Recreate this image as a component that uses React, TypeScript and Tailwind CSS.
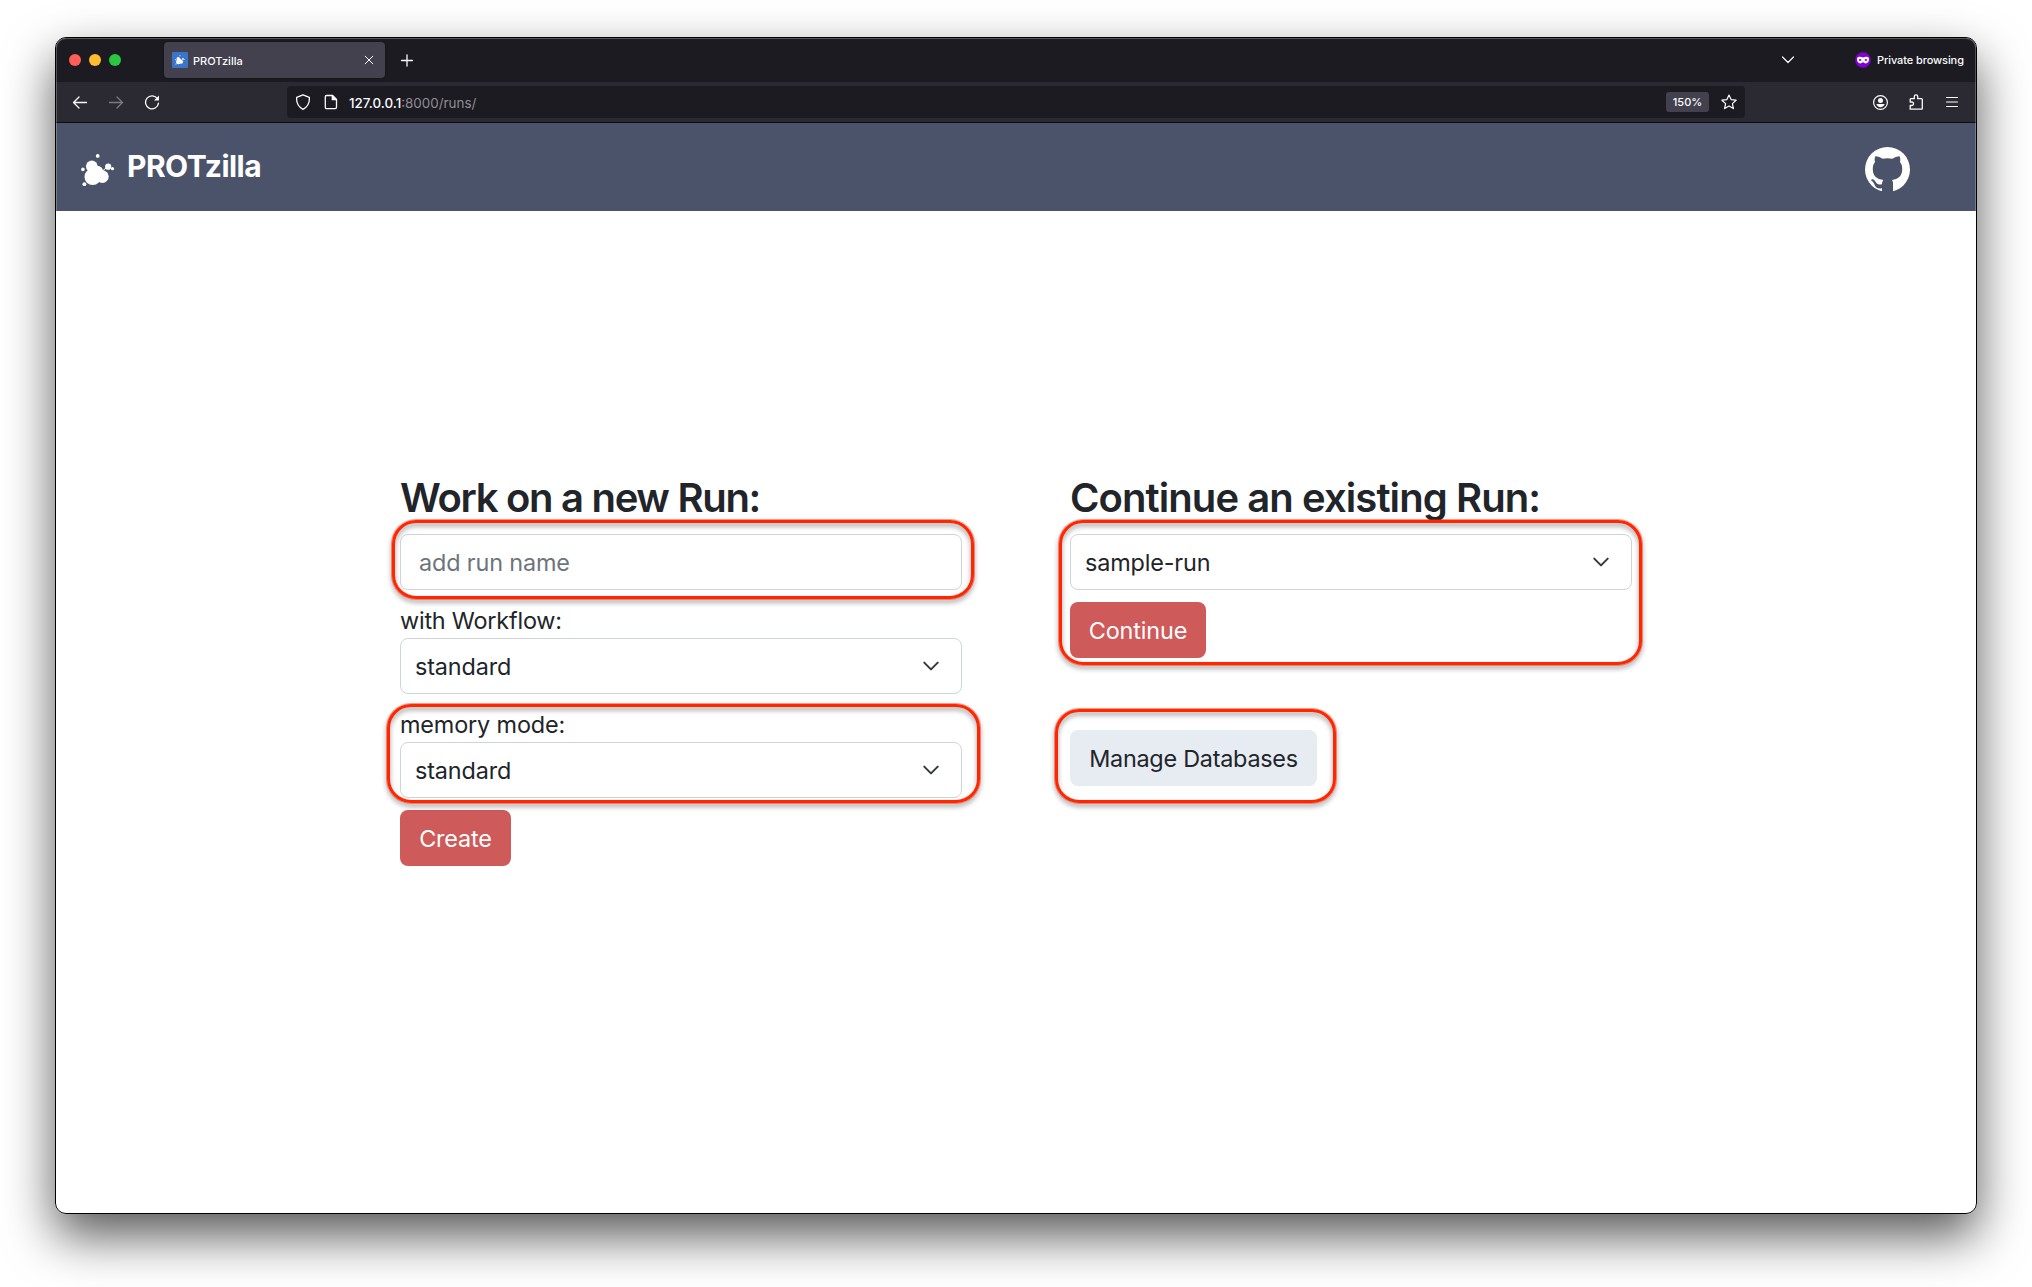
import React from "react";

function Blob({ className }: { className?: string }) {
  return (
    <svg viewBox="0 0 34 33" className={className} fill="currentColor">
      <circle cx="16.700" cy="1.900" r="1.900" />
      <circle cx="1.900" cy="15.400" r="1.800" />
      <circle cx="3.400" cy="30.200" r="1.900" />
      <circle cx="31.500" cy="14.700" r="1.600" />
      <circle cx="27.200" cy="12.700" r="3.100" />
      <circle cx="10.800" cy="12.400" r="5.800" />
      <circle cx="11.700" cy="22.900" r="8.200" />
      <circle cx="16.300" cy="17.500" r="5.800" />
      <circle cx="21.400" cy="22.600" r="6.300" />
      <path d="M21 17.500 25.500 13.500" stroke="currentColor" strokeWidth="1" />
    </svg>
  );
}

function Chevron({ className }: { className?: string }) {
  return (
    <svg viewBox="0 0 16 16" className={className} fill="none" stroke="#343a40" strokeWidth="1.800" strokeLinecap="round" strokeLinejoin="round">
      <path d="m2 5 6 6 6-6" />
    </svg>
  );
}

function Select({ value }: { value: string }) {
  return (
    <div className="flex h-14 w-[562px] items-center justify-between rounded-[8px] border border-[#ced4da] bg-white pl-[14px] pr-[21px] leading-none text-[#212529]">
      <span className="pt-0.5">{value}</span>
      <Chevron className="h-[18px] w-[18px]" />
    </div>
  );
}

function Highlight({ className }: { className: string }) {
  return (
    <div className={`pointer-events-none absolute rounded-[24px] border-3 border-[#ff2600] shadow-[0_0_0_1px_rgba(255,38,0,0.45)] drop-shadow-[0_3px_2.5px_rgba(0,0,0,0.4)] ${className}`} />
  );
}

function TabStrip() {
  return (
    <div className="flex h-11 items-center bg-[#1c1b22] text-[#fbfbfe]">
      <div className="ml-[13px] flex gap-2">
        <i className="h-3 w-3 rounded-full bg-[#ff5f57]" />
        <i className="h-3 w-3 rounded-full bg-[#febc2e]" />
        <i className="h-3 w-3 rounded-full bg-[#28c840]" />
      </div>
      <div className="ml-[43px] flex h-9 w-[221px] items-center rounded-[4px] bg-[#42414d] pl-2 shadow-[0_0_3px_rgba(0,0,0,0.4)]">
        <div className="flex h-4 w-4 items-center justify-center rounded-[1px] bg-[#3a75c9]">
          <Blob className="h-[10px] w-[10px]" />
        </div>
        <span className="ml-[5px] pt-0.5 text-[11px] leading-none font-medium">PROTzilla</span>
        <svg viewBox="0 0 10 10" className="mr-[11px] ml-auto h-[10px] w-[10px]" stroke="currentColor" strokeWidth="1" strokeLinecap="round">
          <path d="m1.200 1.200 7.600 7.600M8.800 1.200 1.200 8.800" />
        </svg>
      </div>
      <svg viewBox="0 0 14 14" className="ml-[15px] h-[14px] w-[14px]" stroke="currentColor" strokeWidth="1.3" strokeLinecap="round">
        <path d="M7 2v11M1.500 7.500h11" />
      </svg>
      <svg viewBox="0 0 14 8" className="ml-auto h-2 w-[14px]" fill="none" stroke="currentColor" strokeWidth="1.2" strokeLinecap="round" strokeLinejoin="round">
        <path d="m1.500 1 5.500 5.500 5.500-5.500" />
      </svg>
      <svg viewBox="0 0 16 16" className="ml-[60px] h-4 w-4">
        <circle cx="8" cy="8" r="7.800" fill="#8000d7" />
        <path fill="#fff" fillRule="evenodd" d="M2 6.200C2.800 4.700 5.600 4.300 8 5.500c2.400-1.200 5.200-.8 6 .7.300 3.300-1.300 5.200-3.300 5.200-1.300 0-1.900-1.200-2.700-1.200s-1.400 1.200-2.700 1.200C3.300 11.400 1.700 9.500 2 6.200zM3.700 8c.7 1.200 2.100 1.200 2.900.1-.8-1.300-2.300-1.300-2.900-.1zm5.700.1c.8 1.100 2.200 1.100 2.900-.1-.6-1.200-2.100-1.200-2.900.1z" />
      </svg>
      <span className="mr-[12px] ml-[6px] w-[87px] pt-px text-[11px] leading-none font-medium tracking-[-0.09px] whitespace-nowrap">Private browsing</span>
    </div>
  );
}

function Toolbar() {
  return (
    <div className="flex h-[41px] items-center border-b border-[#0c0c0d] bg-[#2b2a33] text-[#fbfbfe]">
      <svg viewBox="0 0 16 16" className="ml-4 h-4 w-4" fill="none" stroke="currentColor" strokeWidth="1.3" strokeLinecap="round" strokeLinejoin="round">
        <path d="M14.500 8.500H1.500M7 3 1.500 8.500 7 14" />
      </svg>
      <svg viewBox="0 0 16 16" className="ml-5 h-4 w-4 text-[#7b7a82]" fill="none" stroke="currentColor" strokeWidth="1.3" strokeLinecap="round" strokeLinejoin="round">
        <path d="M1.500 8.500h13M9 3 14.500 8.500 9 14" />
      </svg>
      <svg viewBox="0 0 16 16" className="ml-5 h-4 w-4" fill="none" stroke="currentColor" strokeWidth="1.3" strokeLinecap="round">
        <path d="M13.500 4.800A6.500 6.500 0 1 0 14.500 9.200" />
        <path d="M15 1.500v5H10z" fill="currentColor" stroke="none" />
      </svg>
      <div className="ml-[127px] flex h-8 w-[1458px] items-center rounded-[4px] bg-[#1c1b22]">
        <svg viewBox="0 0 16 16" className="ml-2 h-4 w-4" fill="none" stroke="currentColor" strokeWidth="1.3" strokeLinejoin="round">
          <path d="M8 .8 14.300 3.300c.5 4.700-1.300 9.400-6.300 12C3 12.700 1.200 8 1.700 3.300z" />
        </svg>
        <svg viewBox="0 0 16 16" className="ml-3 h-4 w-4" fill="none" stroke="currentColor" strokeWidth="1.300" strokeLinejoin="round">
          <path d="M3.600 1.500h5.900l4 4v7.800a1.300 1.300 0 0 1-1.300 1.300H3.600a1.300 1.300 0 0 1-1.300-1.300V2.800a1.300 1.300 0 0 1 1.300-1.300z" />
          <path d="M9.300 1.500v4.200h4.200z" fill="currentColor" />
        </svg>
        <div className="ml-[10px] pt-[3px] text-[13.400px] leading-none text-[#8f8e96]">
          <span className="font-medium text-[#fbfbfe]">127.0.0.1</span>:8000/runs/
        </div>
        <span className="mr-3 ml-auto flex h-5 w-[43px] items-center justify-center rounded-[3px] bg-[#42414d] text-[11px] leading-none font-medium">150%</span>
        <svg viewBox="0 0 16 16" className="mr-2 h-4 w-4" fill="none" stroke="currentColor" strokeWidth="1.200" strokeLinejoin="round">
          <path d="m8 1 2.100 4.600 5 .6-3.700 3.400 1 5L8 12.100l-4.400 2.500 1-5L.9 6.200l5-.6z" />
        </svg>
      </div>
      <svg viewBox="0 0 16 16" className="ml-auto h-4 w-4">
        <circle cx="8.500" cy="8.500" r="6.900" fill="none" stroke="currentColor" strokeWidth="1.200" />
        <circle cx="8.500" cy="6.400" r="2.500" fill="currentColor" />
        <path d="M4.400 10h8.200c-.3 2-2.200 3.200-4.100 3.200s-3.800-1.200-4.100-3.200z" fill="currentColor" />
      </svg>
      <svg viewBox="0 0 16 16" className="ml-5 h-4 w-4" fill="none" stroke="currentColor" strokeWidth="1.300" strokeLinejoin="round">
        <path d="M2.200 15.200V11.500h1.600a1.700 1.700 0 0 0 0-3.500H2.200V5.500a.8.800 0 0 1 .8-.8h3.300V2.500a1.700 1.700 0 0 1 3.400 0v2.200h3.800a.8.800 0 0 1 .8.800v8.900a.8.800 0 0 1-.8.800z" />
      </svg>
      <svg viewBox="0 0 16 16" className="mr-4 ml-5 h-4 w-4" stroke="currentColor" strokeWidth="1.200" strokeLinecap="round">
        <path d="M2.500 3.500h11M2.500 8h11M2.500 12.500h11" />
      </svg>
    </div>
  );
}

export default function App() {
  return (
    <div className="h-[1287px] w-[2032px] overflow-hidden bg-white pt-[37px] pl-[55px] font-['Inter',sans-serif]">
      <div className="h-[1177px] w-[1922px] rounded-[11px] shadow-[0_22px_50px_rgba(0,0,0,0.66)]">
        <div className="relative flex h-full flex-col overflow-hidden rounded-[11px] border border-black bg-white">
          <TabStrip />
          <Toolbar />
          <header className="flex h-[88px] shrink-0 items-start bg-[#4b536a] text-white">
            <Blob className="mt-[31px] ml-[25px] h-[33px] w-[34px]" />
            <h1 className="mt-[25px] ml-[12px] text-[30px] leading-[36px] font-bold tracking-[-0.55px]">PROTzilla</h1>
            <svg viewBox="0 0 45 45" className="mt-6 mr-[66px] ml-auto h-[45px] w-[45px]">
              <circle cx="22.500" cy="22.500" r="22.500" fill="#fff" />
              <path
                fill="#4b536a"
                d="M10.300 9.300C13 9.300 15.500 10.500 17.500 11.800C20.800 11 24.200 11 27.500 11.800C29.500 10.500 32 9.300 34.600 9.300C35.500 11.500 35.400 13.500 35 15C37 17.500 37.300 20 37.200 22.500C37.200 29 33 32.200 27 33C28 34.300 28 36 28 37.500V46H17V41.300C10.500 42.500 10.300 38.500 8.600 36C7.800 34.600 6.800 33.800 6 33.200C6.500 31.800 8.700 32 10 34C11.500 36.300 12.500 38.300 17 37.300C17 36 17.300 34 18.300 33C12 32.200 7.800 29 7.800 22.500C7.700 20 8 17.500 10 15C9.500 13 9.500 11 10.300 9.300z"
              />
            </svg>
          </header>
          <main className="flex gap-[108px] pt-[262px] pl-[344px] text-[23.4px] tracking-[-0.14px] text-[#212529]">
            <section className="w-[562px]">
              <h2 className="h-[61px] text-[40px] leading-[50px] font-semibold tracking-[-1.3px] whitespace-nowrap">Work on a new Run:</h2>
              <div className="relative">
                <div className="flex h-14 items-center rounded-[8px] border border-[#ced4da] pt-0.5 pl-[18px] leading-none text-[#6c757d]">add run name</div>
                <Highlight className="-top-[14px] -left-[8px] h-[79px] w-[582px]" />
              </div>
              <div className="mt-3 h-9 pt-px leading-9 tracking-[-0.2px]">with Workflow:</div>
              <Select value="standard" />
              <div className="relative mt-3">
                <div className="h-9 pt-px leading-9">memory mode:</div>
                <Select value="standard" />
                <Highlight className="-top-[2px] -left-[13px] h-[99px] w-[593px]" />
              </div>
              <button className="mt-3 h-14 w-[111px] rounded-[8px] bg-[#ce5a5a] pt-0.5 leading-none text-white">Create</button>
            </section>
            <section className="w-[562px]">
              <h2 className="h-[61px] text-[40px] leading-[50px] font-semibold tracking-[-0.92px] whitespace-nowrap">Continue an existing Run:</h2>
              <div className="relative">
                <Select value="sample-run" />
                <button className="mt-3 block h-14 w-[136px] rounded-[8px] bg-[#ce5a5a] pt-0.5 leading-none text-white">Continue</button>
                <Highlight className="-top-[14px] -left-[11px] h-[145px] w-[583px]" />
              </div>
              <div className="relative mt-[72px] w-[247px]">
                <button className="block h-14 w-[247px] rounded-[8px] bg-[#e7ebf2] pt-0.5 leading-none tracking-[-0.25px] whitespace-nowrap">Manage Databases</button>
                <Highlight className="-top-[21px] -left-[15px] h-[94px] w-[281px]" />
              </div>
            </section>
          </main>
          <div className="pointer-events-none absolute inset-0 rounded-[10px] border border-white/25" />
        </div>
      </div>
    </div>
  );
}
